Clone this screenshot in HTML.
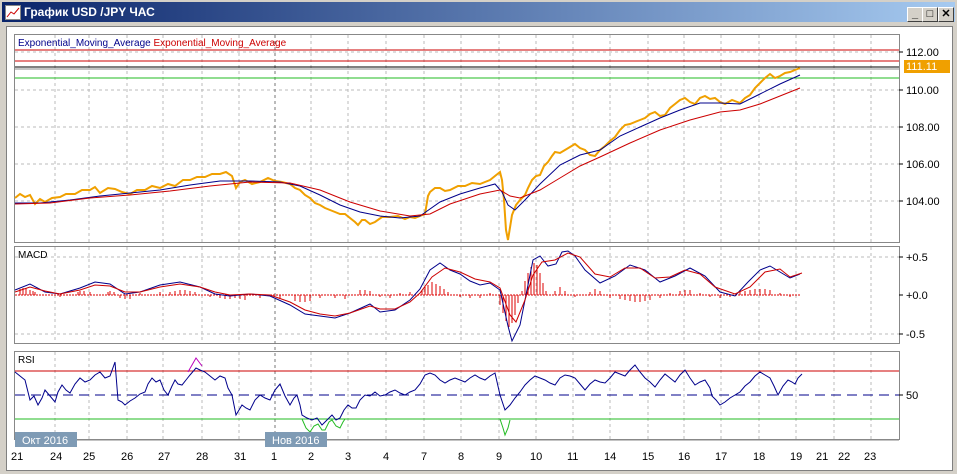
<!DOCTYPE html>
<html><head><meta charset="utf-8"><style>
html,body{margin:0;padding:0;width:957px;height:474px;overflow:hidden;background:#d4d0c8;font-family:"Liberation Sans",sans-serif}
.title{position:absolute;left:2px;top:2px;width:953px;height:20px;background:linear-gradient(90deg,#0a246a,#a6caf0);color:#fff;font-weight:bold;font-size:12px}
.title span{position:absolute;left:22px;top:3px}
.ico{position:absolute;left:3px;top:3px;width:14px;height:13px;background:#fff;border:1px solid #888}
.btn{position:absolute;top:5px;width:14px;height:13px;background:#d4d0c8;border:1px solid;border-color:#fff #404040 #404040 #fff;font-size:11px;color:#000;text-align:center;line-height:12px;font-weight:bold}
.client{position:absolute;left:6px;top:26px;width:945px;height:443px;background:#fff;border:1px solid #808080}
</style></head><body>
<div class="title"><div class="ico"><svg width="14" height="13"><polyline points="1,11 5,6 8,8 13,2" stroke="#c00" fill="none"/></svg></div><span>График USD /JPY  ЧАС</span>
<div class="btn" style="left:905px">_</div><div class="btn" style="left:920px">□</div><div class="btn" style="left:936px">✕</div></div>
<div class="client"></div>
<svg style="position:absolute;left:0;top:0" width="957" height="474" font-family="Liberation Sans, sans-serif">
<rect x="14.5" y="34.5" width="885" height="208" fill="none" stroke="#888"/>
<rect x="14.5" y="246.5" width="885" height="97" fill="none" stroke="#888"/>
<rect x="14.5" y="351.5" width="885" height="88" fill="none" stroke="#888"/>
<g stroke="#bbb" stroke-dasharray="3,3"><line x1="15" x2="899" y1="52" y2="52"/><line x1="15" x2="899" y1="90" y2="90"/><line x1="15" x2="899" y1="127" y2="127"/><line x1="15" x2="899" y1="164" y2="164"/><line x1="15" x2="899" y1="201" y2="201"/><line x1="15" x2="899" y1="257" y2="257"/><line x1="15" x2="899" y1="334" y2="334"/></g>
<g stroke="#bbb" stroke-dasharray="3,3">
<path d="M55 35V242M89 35V242M127 35V242M163 35V242M202 35V242M239 35V242M311 35V242M348 35V242M386 35V242M424 35V242M461 35V242M499 35V242M536 35V242M573 35V242M610 35V242M648 35V242M684 35V242M721 35V242M759 35V242M796 35V242M834 35V242M871 35V242"/>
<path d="M55 247V343M89 247V343M127 247V343M163 247V343M202 247V343M239 247V343M311 247V343M348 247V343M386 247V343M424 247V343M461 247V343M499 247V343M536 247V343M573 247V343M610 247V343M648 247V343M684 247V343M721 247V343M759 247V343M796 247V343M834 247V343M871 247V343"/>
<path d="M55 352V439M89 352V439M127 352V439M163 352V439M202 352V439M239 352V439M311 352V439M348 352V439M386 352V439M424 352V439M461 352V439M499 352V439M536 352V439M573 352V439M610 352V439M648 352V439M684 352V439M721 352V439M759 352V439M796 352V439M834 352V439M871 352V439"/>
</g>
<path d="M275 35V439" stroke="#777" stroke-dasharray="3,3"/>
<line x1="15" x2="899" y1="50" y2="50" stroke="#c00"/>
<line x1="15" x2="899" y1="61" y2="61" stroke="#c00"/>
<line x1="15" x2="899" y1="67" y2="67" stroke="#000"/>
<line x1="15" x2="899" y1="69" y2="69" stroke="#888"/>
<line x1="15" x2="899" y1="78" y2="78" stroke="#2b2"/>
<text x="18" y="46" font-size="10" fill="#00008b">Exponential_Moving_Average <tspan fill="#c00">Exponential_Moving_Average</tspan></text>
<polyline fill="none" stroke="#f0a000" stroke-width="2" points="15,198 20,194 25,197 30,195 35,204 40,199 45,202 52,198 60,197 66,194 75,194 82,190 90,190 95,187 100,193 108,188 115,189 122,192 130,194 137,190 145,190 152,186 160,188 168,184 175,186 183,180 190,180 197,177 205,177 212,174 220,174 226,172 232,176 236,188 240,182 245,180 252,184 260,182 268,178 275,181 282,182 290,184 295,188 300,190 305,195 310,198 315,203 320,205 325,208 330,210 335,212 340,214 345,214 350,218 355,222 358,225 362,220 365,220 370,224 375,222 382,217 390,217 398,216 405,219 410,217 415,218 420,216 425,214 428,196 430,192 435,188 440,188 445,191 450,190 458,186 465,186 472,183 480,184 485,182 490,180 495,176 500,172 502,180 504,200 506,230 508,240 512,215 516,205 520,200 525,195 528,188 532,180 536,176 540,175 544,166 548,162 552,156 555,152 560,153 565,150 570,147 575,144 580,148 585,150 590,155 595,156 600,150 605,146 610,141 615,137 620,130 625,125 630,124 635,122 640,120 645,118 650,114 655,112 660,116 665,115 670,108 675,104 680,100 685,98 690,102 695,104 700,98 705,96 710,99 715,98 720,102 725,104 732,100 740,103 745,98 750,95 755,88 760,83 765,78 770,74 775,78 780,76 785,73 790,72 795,70 800,68"/>
<polyline fill="none" stroke="#00008b" points="15,203 40,203 70,200 100,196 130,193 160,190 190,185 220,181 250,181 280,182 300,186 320,195 340,205 360,212 380,216 400,218 420,216 440,202 460,194 480,188 495,184 502,192 508,205 515,210 525,200 540,184 560,165 580,155 600,150 620,136 640,127 660,118 680,110 700,103 720,103 740,104 760,94 780,84 800,75"/>
<polyline fill="none" stroke="#c00" points="15,204 50,203 90,198 130,195 170,191 210,186 250,182 290,183 320,190 350,202 380,211 410,216 430,214 450,204 480,194 500,190 510,196 520,198 540,190 560,178 580,166 600,157 630,143 660,130 690,120 720,112 740,110 760,104 780,96 800,88"/>
<rect x="904" y="60" width="46" height="13" fill="#f0a000"/>
<g font-size="11" fill="#000"><text x="906" y="56">112.00</text><text x="906" y="70" fill="#fff">111.11</text><text x="906" y="94">110.00</text><text x="906" y="131">108.00</text><text x="906" y="168">106.00</text><text x="906" y="205">104.00</text>
<text x="906" y="261">+0.5</text><text x="906" y="299">+0.0</text><text x="906" y="338">-0.5</text><text x="906" y="399">50</text></g>
<g stroke="#000"><path d="M899 52h4M899 90h4M899 127h4M899 164h4M899 201h4M899 257h4M899 295h4M899 334h4M899 395h4"/></g>
<text x="18" y="258" font-size="10" fill="#000">MACD</text>
<g stroke="#d00"><path d="M20 295v-6M23 295v-7M26 295v-7M30 295v-5M33 295v-4M35 295v-3M60 295v2M78 295v-3M80 295v-4M84 295v-4M90 295v-3M108 295v-3M110 295v-4M114 295v-3M120 295v3M125 295v4M130 295v4M140 295v-2M160 295v-3M170 295v-3M175 295v-4M180 295v-5M185 295v-5M190 295v-4M195 295v-3M210 295v2M220 295v3M225 295v4M230 295v4M235 295v3M240 295v4M245 295v5M260 295v3M280 295v4M295 295v6M300 295v7M305 295v7M310 295v6M320 295v3M335 295v3M345 295v4M360 295v-5M365 295v-5M370 295v-4M380 295v2M390 295v3M400 295v-2M410 295v-3M422 295v-5M425 295v-8M428 295v-10M432 295v-13M436 295v-11M440 295v-9M444 295v-6M448 295v-3M460 295v2M470 295v3M480 295v3M490 295v-2M500 295v10M503 295v18M506 295v26M509 295v32M512 295v28M515 295v20M518 295v8M522 295v-4M525 295v-14M528 295v-22M531 295v-28M534 295v-32M537 295v-30M540 295v-22M543 295v-12M546 295v-4M555 295v-4M560 295v-8M565 295v-4M575 295v2M590 295v-3M595 295v-6M600 295v-4M610 295v3M620 295v4M625 295v5M630 295v6M635 295v7M640 295v7M645 295v6M650 295v5M660 295v3M670 295v-2M680 295v-4M685 295v-5M690 295v-5M700 295v-2M710 295v2M720 295v3M730 295v2M740 295v-3M745 295v-4M750 295v-5M755 295v-6M760 295v-6M765 295v-6M770 295v-5M780 295v-2M790 295v2"/></g>
<line x1="15" x2="800" y1="295" y2="295" stroke="#d00" stroke-dasharray="2,1"/>
<polyline fill="none" stroke="#00008b" points="15,290 30,284 45,292 60,294 80,288 95,282 110,284 125,294 140,292 160,285 180,282 200,287 215,294 230,296 250,294 270,296 290,305 305,314 320,316 335,318 350,313 370,304 380,312 395,310 410,300 420,289 430,270 440,263 450,270 460,274 470,281 480,285 490,283 500,290 508,326 512,341 520,325 527,290 533,260 540,256 548,266 556,264 562,252 568,251 575,256 585,270 600,283 615,276 630,265 645,270 660,282 675,276 690,268 705,276 720,292 735,296 748,282 760,270 770,266 780,272 790,278 800,274"/>
<polyline fill="none" stroke="#c00" points="15,292 30,287 45,291 60,294 80,290 95,285 110,286 125,292 140,292 160,287 180,284 200,287 215,292 230,295 250,294 270,295 290,302 305,310 320,314 335,316 350,313 370,306 380,309 395,309 410,302 420,293 432,277 445,268 460,272 475,279 490,282 500,288 510,315 516,322 525,300 533,275 542,262 555,260 568,253 580,257 595,274 610,277 625,268 640,268 655,278 670,277 685,270 700,274 715,287 735,294 750,287 765,272 780,269 790,277 802,273"/>
<text x="18" y="363" font-size="10" fill="#000">RSI</text>
<line x1="15" x2="899" y1="371" y2="371" stroke="#c00"/>
<line x1="15" x2="899" y1="419" y2="419" stroke="#2b2"/>
<line x1="15" x2="899" y1="395" y2="395" stroke="#00008b" stroke-dasharray="10,6"/>
<polyline fill="none" stroke="#00008b" points="15,372 20,376 25,380 28,392 30,400 34,396 38,405 42,398 45,390 50,396 55,402 58,392 62,385 66,390 70,393 75,384 80,378 85,382 90,380 95,375 100,372 105,378 110,376 115,362 118,400 122,402 125,405 130,401 135,398 140,394 145,392 148,384 152,378 156,382 160,380 164,390 168,395 172,386 175,380 178,384 182,385 186,380 190,375 196,368 200,370 205,372 210,376 215,380 220,376 225,378 228,388 232,395 236,415 239,410 242,405 246,408 250,410 255,400 260,395 265,398 270,400 275,390 280,384 285,396 290,405 294,398 297,395 300,405 302,415 307,418 312,420 317,418 322,425 327,420 332,415 336,420 340,418 344,410 348,405 352,408 356,408 360,400 365,395 370,396 375,392 380,396 385,395 390,392 395,390 400,393 405,395 410,392 415,390 420,384 425,375 430,373 435,375 440,380 445,383 450,380 455,378 460,380 465,382 470,378 475,375 480,378 485,380 490,376 495,373 500,395 505,410 510,405 515,398 520,392 525,385 530,380 535,376 540,378 545,380 550,383 555,385 560,378 565,375 570,376 575,378 580,384 585,390 590,384 595,380 600,382 605,383 610,378 615,372 620,374 625,376 630,370 635,365 640,372 645,378 650,382 655,387 660,380 665,374 670,378 675,382 680,375 685,370 690,378 695,385 700,382 705,380 710,388 712,396 716,400 720,405 725,402 730,398 735,395 740,392 745,386 750,382 755,376 760,372 765,375 770,378 774,386 778,395 783,386 788,380 792,382 795,384 798,378 802,374"/>
<polyline fill="none" stroke="#b0b" points="188,372 196,358 202,366"/>
<polyline fill="none" stroke="#2b2" points="302,419 306,428 310,432 314,426 318,424 322,430 325,430 329,422 332,420 336,426 340,428 343,422 345,419"/>
<polyline fill="none" stroke="#2b2" points="500,419 503,428 505,435 508,428 510,420"/>
<line x1="15" x2="899" y1="440" y2="440" stroke="#888"/>
<rect x="15" y="432" width="62" height="15" fill="#7f9bb5"/><text x="22" y="444" font-size="11" fill="#fff">Окт 2016</text>
<rect x="265" y="432" width="62" height="15" fill="#7f9bb5"/><text x="272" y="444" font-size="11" fill="#fff">Нов 2016</text>
<g font-size="11" fill="#000"><text x="11" y="460">21</text><text x="50" y="460">24</text><text x="83" y="460">25</text><text x="121" y="460">26</text><text x="158" y="460">27</text><text x="196" y="460">28</text><text x="234" y="460">31</text><text x="271" y="460">1</text><text x="308" y="460">2</text><text x="345" y="460">3</text><text x="383" y="460">4</text><text x="421" y="460">7</text><text x="458" y="460">8</text><text x="496" y="460">9</text><text x="530" y="460">10</text><text x="567" y="460">11</text><text x="604" y="460">14</text><text x="642" y="460">15</text><text x="678" y="460">16</text><text x="715" y="460">17</text><text x="753" y="460">18</text><text x="790" y="460">19</text><text x="816" y="460">21</text><text x="838" y="460">22</text><text x="864" y="460">23</text></g>
</svg>
</body></html>
